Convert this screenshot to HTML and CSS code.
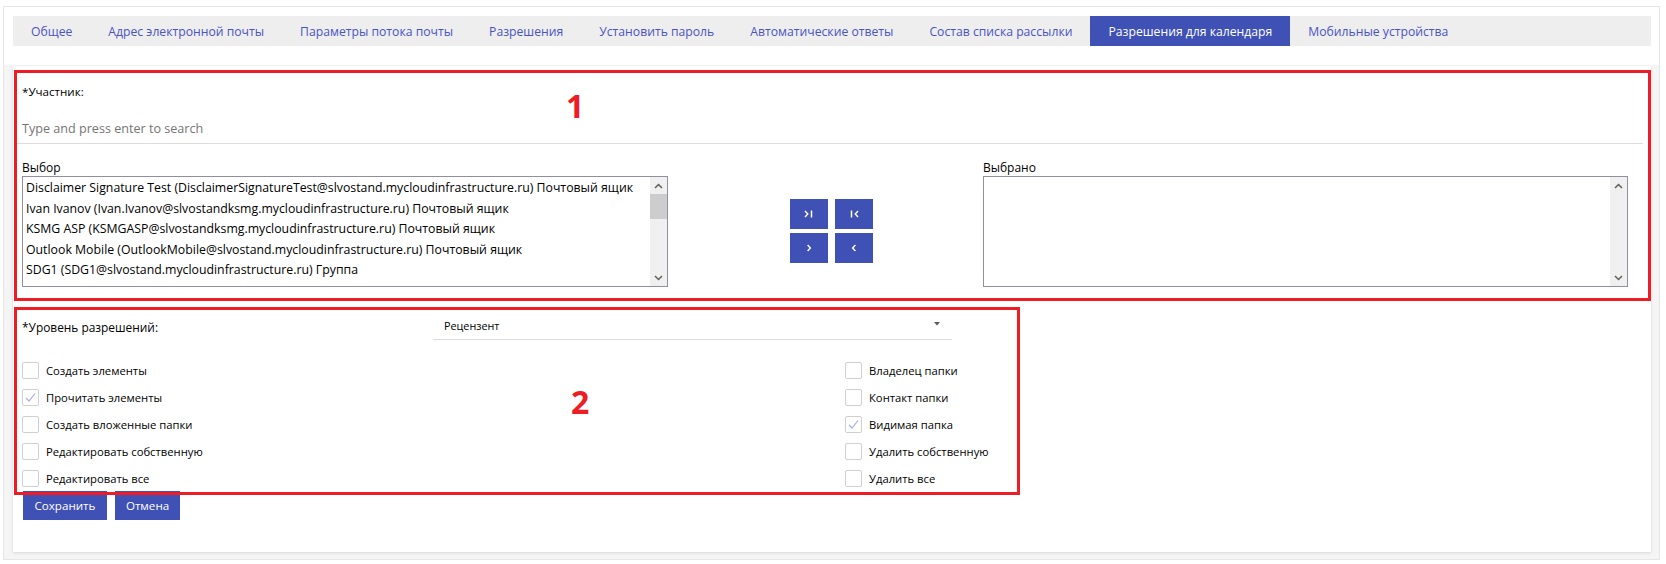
FILE: index.html
```html
<!DOCTYPE html>
<html lang="ru">
<head>
<meta charset="utf-8">
<title>Разрешения для календаря</title>
<link rel="stylesheet" href="styles.css">
</head>
<body>
<div class="page">
  <nav class="tabs">
    <a class="tab">Общее</a>
    <a class="tab">Адрес электронной почты</a>
    <a class="tab">Параметры потока почты</a>
    <a class="tab">Разрешения</a>
    <a class="tab">Установить пароль</a>
    <a class="tab">Автоматические ответы</a>
    <a class="tab">Состав списка рассылки</a>
    <a class="tab active">Разрешения для календаря</a>
    <a class="tab">Мобильные устройства</a>
  </nav>

  <div class="content">
  <section class="card">
    <div class="mark mark-1">
      <span class="num num-1">1</span>
      <div class="field-label">*Участник:</div>
      <div class="search">Type and press enter to search</div>
      <div class="picker">
        <div class="col col-left">
          <div class="list-label">Выбор</div>
          <div class="listbox">
            <ul class="items">
              <li>Disclaimer Signature Test (DisclaimerSignatureTest@slvostand.mycloudinfrastructure.ru) Почтовый ящик</li>
              <li>Ivan Ivanov (Ivan.Ivanov@slvostandksmg.mycloudinfrastructure.ru) Почтовый ящик</li>
              <li>KSMG ASP (KSMGASP@slvostandksmg.mycloudinfrastructure.ru) Почтовый ящик</li>
              <li>Outlook Mobile (OutlookMobile@slvostand.mycloudinfrastructure.ru) Почтовый ящик</li>
              <li>SDG1 (SDG1@slvostand.mycloudinfrastructure.ru) Группа</li>
            </ul>
            <div class="scrollbar">
              <div class="sb-btn"><svg width="9" height="6" viewBox="0 0 9 6"><polyline points="1,5 4.5,1.5 8,5" fill="none" stroke="#5f5f5f" stroke-width="1.5"/></svg></div>
              <div class="sb-track"><div class="sb-thumb"></div></div>
              <div class="sb-btn"><svg width="9" height="6" viewBox="0 0 9 6"><polyline points="1,1 4.5,4.5 8,1" fill="none" stroke="#5f5f5f" stroke-width="1.5"/></svg></div>
            </div>
          </div>
        </div>
        <div class="movers">
          <button class="mv" type="button"><svg width="10" height="8" viewBox="0 0 10 8"><polyline points="1,1 3.8,4 1,7" fill="none" stroke="#fff" stroke-width="1.4"/><line x1="7.5" y1="0.5" x2="7.5" y2="7.5" stroke="#fff" stroke-width="1.5"/></svg></button>
          <button class="mv" type="button"><svg width="10" height="8" viewBox="0 0 10 8"><line x1="2.5" y1="0.5" x2="2.5" y2="7.5" stroke="#fff" stroke-width="1.5"/><polyline points="9,1 6.2,4 9,7" fill="none" stroke="#fff" stroke-width="1.4"/></svg></button>
          <button class="mv" type="button"><svg width="10" height="8" viewBox="0 0 10 8"><polyline points="3.6,1 6.4,4 3.6,7" fill="none" stroke="#fff" stroke-width="1.4"/></svg></button>
          <button class="mv" type="button"><svg width="10" height="8" viewBox="0 0 10 8"><polyline points="6.4,1 3.6,4 6.4,7" fill="none" stroke="#fff" stroke-width="1.4"/></svg></button>
        </div>
        <div class="col col-right">
          <div class="list-label">Выбрано</div>
          <div class="listbox">
            <ul class="items"></ul>
            <div class="scrollbar">
              <div class="sb-btn"><svg width="9" height="6" viewBox="0 0 9 6"><polyline points="1,5 4.5,1.5 8,5" fill="none" stroke="#5f5f5f" stroke-width="1.5"/></svg></div>
              <div class="sb-track"></div>
              <div class="sb-btn"><svg width="9" height="6" viewBox="0 0 9 6"><polyline points="1,1 4.5,4.5 8,1" fill="none" stroke="#5f5f5f" stroke-width="1.5"/></svg></div>
            </div>
          </div>
        </div>
      </div>
    </div>

    <div class="mark mark-2">
      <span class="num num-2">2</span>
      <div class="level-row">
        <div class="level-label">*Уровень разрешений:</div>
        <div class="level-select">
          <span>Рецензент</span>
          <svg class="caret" width="6" height="4" viewBox="0 0 6 4"><polygon points="0,0 6,0 3,3.5" fill="#5a5a5a"/></svg>
        </div>
      </div>
      <div class="checks">
        <div class="check-col">
          <label class="check"><span class="box"></span>Создать элементы</label>
          <label class="check"><span class="box checked"><svg width="15" height="15" viewBox="0 0 15 15"><polyline points="3,8 6,11 12,3.5" fill="none" stroke="#a7adec" stroke-width="1.2"/></svg></span>Прочитать элементы</label>
          <label class="check"><span class="box"></span>Создать вложенные папки</label>
          <label class="check"><span class="box"></span>Редактировать собственную</label>
          <label class="check"><span class="box"></span>Редактировать все</label>
        </div>
        <div class="check-col">
          <label class="check"><span class="box"></span>Владелец папки</label>
          <label class="check"><span class="box"></span>Контакт папки</label>
          <label class="check"><span class="box checked"><svg width="15" height="15" viewBox="0 0 15 15"><polyline points="3,8 6,11 12,3.5" fill="none" stroke="#a7adec" stroke-width="1.2"/></svg></span>Видимая папка</label>
          <label class="check"><span class="box"></span>Удалить собственную</label>
          <label class="check"><span class="box"></span>Удалить все</label>
        </div>
      </div>
    </div>

    <div class="actions">
      <button class="btn" type="button">Сохранить</button>
      <button class="btn" type="button">Отмена</button>
    </div>
  </section>
  </div>
</div>
</body>
</html>
```

FILE: styles.css
```css
* { box-sizing: border-box; }

body {
  margin: 0;
  background: #ffffff;
  font-family: "Open Sans", "Noto Sans", sans-serif;
  color: #000;
}

.page {
  margin: 6px 6px 4px 3px;
  border: 1px solid #e6e6e6;
  padding-top: 9px;
}

/* Tabs */
.tabs {
  display: flex;
  height: 30px;
  margin: 0 8px 0 9px;
  background: #eeeeee;
}
.tab {
  display: flex;
  align-items: center;
  padding: 1px 18px 0 18px;
  font-size: 12.2px;
  color: #4b53c3;
  white-space: nowrap;
}
.tab.active {
  background: #3f51b5;
  color: #ffffff;
}

/* Tab body */
.content {
  margin-top: 19px;
  padding: 1px 8px 7px 9px;
  background: #f5f5f5;
}

/* Card */
.card {
  padding: 4px 0 32px 0;
  background: #fff;
  box-shadow: 0 1px 3px rgba(0,0,0,0.12);
}

.mark {
  position: relative;
  margin-left: 1px;
  border: 3px solid #ee1c25;
}
.num {
  position: absolute;
  font-family: "Open Sans", sans-serif;
  font-weight: 700;
  font-size: 32px;
  line-height: 1;
  color: #ee1c25;
}
.num-1 { left: 549px; top: 17px; }
.num-2 { left: 554px; top: 76px; }

.mark-1 {
  padding: 10px 5px 11px 5px;
}
.field-label {
  font-size: 11.6px;
  line-height: 18px;
}
.search {
  margin: 13px 0 0 -5px;
  padding: 0 0 0 5px;
  height: 30px;
  border-bottom: 1px solid #dddddd;
  display: flex;
  align-items: center;
  font-size: 12.6px;
  color: #757575;
}

.picker {
  margin-top: 15px;
  display: grid;
  grid-template-columns: 646px 315px 645px;
}
.list-label {
  font-size: 12px;
  line-height: 17px;
}
.listbox {
  display: flex;
  height: 111px;
  border: 1px solid #8f8f9d;
  background: #fff;
}
.items {
  flex: 1;
  margin: 0;
  padding: 1px 0 0 3px;
  list-style: none;
  font-size: 12.3px;
  overflow: hidden;
}
.items li {
  height: 20.5px;
  line-height: 20.5px;
  white-space: nowrap;
}
.scrollbar {
  width: 17px;
  display: flex;
  flex-direction: column;
  background: #f0f0f0;
}
.sb-btn {
  height: 17px;
  display: flex;
  align-items: center;
  justify-content: center;
}
.sb-track {
  flex: 1;
}
.sb-thumb {
  height: 25px;
  background: #cdcdcd;
}

.movers {
  padding: 40px 0 0 122px;
  display: grid;
  grid-template-columns: 38px 38px;
  grid-auto-rows: 30px;
  column-gap: 7px;
  row-gap: 4px;
  align-content: start;
}
.mv {
  border: 0;
  padding: 0;
  background: #3f51b5;
  display: flex;
  align-items: center;
  justify-content: center;
}

/* Section 2 */
.mark-2 {
  margin-top: 6px;
  width: 1006px;
  padding: 0 5px;
  z-index: 1;
}
.level-row {
  margin-top: 4px;
  height: 26px;
  display: flex;
}
.level-label {
  width: 411px;
  font-size: 11.9px;
  display: flex;
  align-items: center;
  padding-bottom: 1px;
}
.level-select {
  width: 519px;
  border-bottom: 1px solid #dddddd;
  display: flex;
  align-items: center;
  justify-content: space-between;
  padding: 0 12px 2px 11px;
  font-size: 10.8px;
}
.caret { margin-bottom: 4px; }

.checks {
  margin-top: 17px;
  display: grid;
  grid-template-columns: 823px 1fr;
}
.check {
  height: 27px;
  display: flex;
  align-items: center;
  gap: 7px;
  font-size: 11.25px;
}
.box {
  width: 17px;
  height: 17px;
  border: 1px solid #d0d0d0;
  border-radius: 2px;
  background: #fff;
  display: flex;
  align-items: center;
  justify-content: center;
}

/* Buttons */
.actions {
  position: relative;
  margin: -4px 0 0 10px;
  display: flex;
  gap: 8px;
}
.btn {
  height: 29px;
  padding: 0 11px;
  border: 0;
  background: #3f51b5;
  color: #fff;
  font-family: "Open Sans", sans-serif;
  font-size: 11.6px;
}
.btn:first-child { padding: 0 11.5px; }
```
